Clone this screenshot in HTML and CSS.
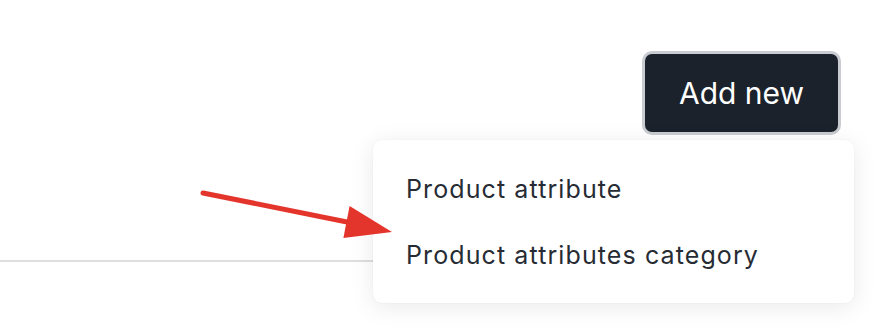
FILE: index.html
```html
<!DOCTYPE html>
<html lang="en">
<head>
  <meta charset="UTF-8">
  <title>Product attributes</title>
  <link rel="stylesheet" href="styles.css">
</head>
<body>

<div class="toolbar">
  <div class="actions">
    <button class="btn">Add new</button>
    <ul class="menu">
      <li>Product attribute</li>
      <li>Product attributes category</li>
    </ul>
  </div>
</div>

<div class="divider"></div>

<svg class="pointer" width="894" height="330" viewBox="0 0 894 330">
  <line x1="203" y1="193" x2="352" y2="223" stroke="#e3352b" stroke-width="5" stroke-linecap="round"/>
  <polygon points="349.6,206 343.4,238 392,232" fill="#e3352b"/>
</svg>

</body>
</html>
```

FILE: styles.css
```css
body {
  margin: 0;
  background: #fff;
  font-family: Inter, 'Noto Sans', sans-serif;
  position: relative;
  width: 894px;
  height: 330px;
  overflow: hidden;
}

.toolbar {
  display: flex;
  justify-content: flex-end;
  padding: 51px 53px 0 0;
}

.actions {
  position: relative;
}

.btn {
  box-sizing: border-box;
  width: 199px;
  height: 84px;
  border: 3px solid #c9ccd1;
  border-radius: 10px;
  background: #1c222c;
  color: #fff;
  font-family: inherit;
  font-size: 30px;
  cursor: pointer;
}

.menu {
  position: absolute;
  top: calc(100% + 5px);
  right: -13px;
  z-index: 2;
  box-sizing: border-box;
  width: 481px;
  height: 163px;
  margin: 0;
  padding: 16px 0 15px;
  list-style: none;
  background: #fff;
  border-radius: 9px;
  box-shadow: 0 4px 24px rgba(0,0,0,0.09), 0 0 2px rgba(0,0,0,0.06);
}

.menu li {
  padding-left: 33px;
  line-height: 66px;
  font-size: 25px;
  letter-spacing: 1.1px;
  color: #272c34;
  white-space: nowrap;
}

.divider {
  margin-top: 125px;
  width: 420px;
  height: 2px;
  background: #dedede;
}

.pointer {
  position: absolute;
  left: 0;
  top: 0;
  z-index: 3;
}
```
